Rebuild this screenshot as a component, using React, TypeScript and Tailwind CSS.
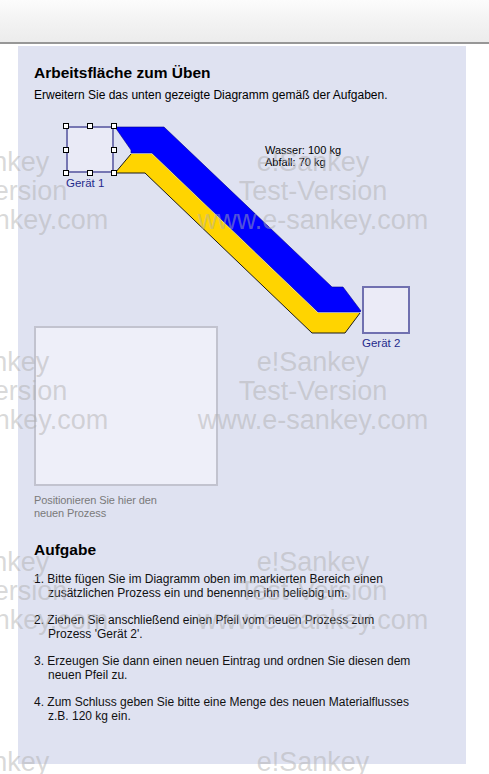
import React from 'react';

const font = { fontFamily: '"Liberation Sans", Arial, sans-serif' };

const tasks = [
  'Bitte fügen Sie im Diagramm oben im markierten Bereich einen zusätzlichen Prozess ein und benennen ihn beliebig um.',
  "Ziehen Sie anschließend einen Pfeil vom neuen Prozess zum Prozess 'Gerät 2'.",
  'Erzeugen Sie dann einen neuen Eintrag und ordnen Sie diesen dem neuen Pfeil zu.',
  'Zum Schluss geben Sie bitte eine Menge des neuen Materialflusses z.B. 120 kg ein.',
];

// selection handles around Gerät 1 (canvas coords)
const handles = [
  [32, 11], [56, 11], [80, 11],
  [32, 34.5], [80, 34.5],
  [32, 58], [56, 58], [80, 58],
];

function Watermark() {
  const groups = [148, 348, 548, 748];
  const cols = [-7, 313];
  return (
    <div className="pointer-events-none absolute inset-0 overflow-hidden" aria-hidden>
      {groups.map((top) =>
        cols.map((cx) => (
          <div
            key={`${top}-${cx}`}
            className="absolute flex w-[320px] flex-col items-center text-[27px] leading-[29px] whitespace-nowrap text-[rgba(174,174,174,0.48)]"
            style={{ top, left: cx - 160 }}
          >
            <span>e!Sankey</span>
            <span>Test-Version</span>
            <span>www.e-sankey.com</span>
          </div>
        ))
      )}
    </div>
  );
}

function Diagram() {
  return (
    <div className="relative mt-[13px] h-[211px] w-full">
      <svg className="absolute left-0 top-0 overflow-visible" width="416" height="230">
        <path
          d="M81,12 L130,12 L298,172 L309,172 L327,196 L326,197 L284,197 L118,38 L97,38 L97,35 Z"
          fill="#0000ff"
          stroke="#00008a"
          strokeWidth="0.6"
        />
        <path
          d="M97,39 L118,39 L284,198 L326,198 L311,218 L278,218 L111,58 L81,58 Z"
          fill="#ffd400"
        />
        <path
          d="M97,39 L81,58 L111,58 L278,218 L311,218 L326,198"
          fill="none"
          stroke="#1a1a1a"
          strokeWidth="1"
        />
      </svg>

      {/* Gerät 1 (selected) */}
      <div className="absolute left-[32px] top-[11px] h-[47px] w-[48px] border-2 border-[#7676b2] bg-[#e9eaf6]" />
      {handles.map(([x, y], i) => (
        <div
          key={i}
          className="absolute h-[6px] w-[6px] border border-black bg-white"
          style={{ left: x - 3, top: y - 3 }}
        />
      ))}
      <div className="absolute left-[32px] top-[61px] text-[11.5px] leading-[14px] text-[#1f2a8c]">Gerät 1</div>

      <div className="absolute left-[231px] top-[29px] text-[11px] leading-[12px] text-black">
        <div>Wasser: 100 kg</div>
        <div>Abfall: 70 kg</div>
      </div>

      {/* Gerät 2 */}
      <div className="absolute left-[328px] top-[171px] h-[48px] w-[48px] border-2 border-[#7070b0] bg-[#ebebf7]" />
      <div className="absolute left-[328px] top-[221px] text-[11.5px] leading-[14px] text-[#1f2a8c]">Gerät 2</div>
    </div>
  );
}

export default function App() {
  return (
    <div className="relative min-h-[774px] w-full overflow-hidden bg-white" style={font}>
      <div className="h-[44px] border-b-2 border-[#979797] bg-gradient-to-b from-[#fcfcfc] via-[#f3f3f3] to-[#ececec]" />

      <div className="ml-[18px] mt-[2px] w-[448px] bg-[#dfe2f1] px-4 pb-[41px] pt-[18px]">
        <h2 className="text-[15.5px] font-bold leading-[18px] text-black">Arbeitsfläche zum Üben</h2>
        <p className="mt-[6px] text-[12px] leading-[14px] text-black">
          Erweitern Sie das unten gezeigte Diagramm gemäß der Aufgaben.
        </p>

        <Diagram />

        <div className="h-[160px] w-[184px] border-2 border-[#c2c3cf] bg-[#eeeff9]" />
        <p className="mt-[8px] w-[150px] text-[11px] leading-[13px] tracking-[-0.1px] text-[#7a7a7a]">
          Positionieren Sie hier den neuen Prozess
        </p>

        <h2 className="mt-[21px] text-[15.5px] font-bold leading-[18px] text-black">Aufgabe</h2>
        <ol className="mt-[14px] flex flex-col gap-[14px]">
          {tasks.map((t, i) => (
            <li key={i} className="w-[382px] pl-[14px] -indent-[14px] text-[12px] leading-[13.5px] text-[#111]">
              {i + 1}. {t}
            </li>
          ))}
        </ol>
      </div>

      <Watermark />
    </div>
  );
}
